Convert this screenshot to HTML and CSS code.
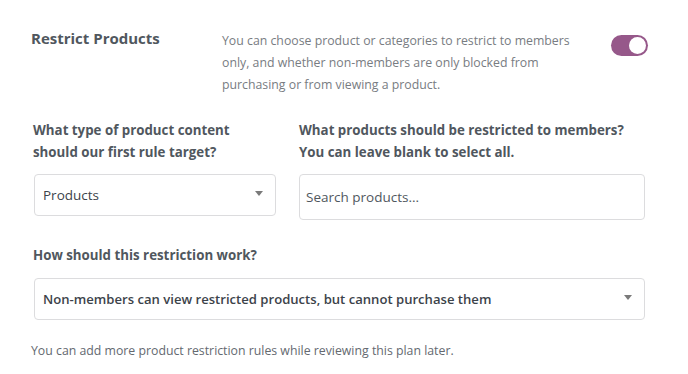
FILE: index.html
```html
<!DOCTYPE html>
<html lang="en">
<head>
    <meta charset="UTF-8">
    <meta name="viewport" content="width=device-width, initial-scale=1.0">
    <title>Restrict Products</title>
    <link rel="stylesheet" href="styles.css">
</head>
<body>
    <div class="panel">
        <div class="head">
            <h2 class="title">Restrict Products</h2>
            <p class="desc">You can choose product or categories to restrict to members only, and whether non-members are only blocked from purchasing or from viewing a product.</p>
            <span class="toggle"><span class="knob"></span></span>
        </div>

        <div class="fields">
            <div class="field">
                <label class="label">What type of product content<br>should our first rule target?</label>
                <div class="select select-small">
                    <span>Products</span>
                    <span class="arrow"></span>
                </div>
            </div>
            <div class="field">
                <label class="label">What products should be restricted to members?<br>You can leave blank to select all.</label>
                <div class="search">Search products...</div>
            </div>
        </div>

        <div class="field field-wide">
            <label class="label">How should this restriction work?</label>
            <div class="select select-strong">
                <span>Non-members can view restricted products, but cannot purchase them</span>
                <span class="arrow"></span>
            </div>
        </div>

        <p class="note">You can add more product restriction rules while reviewing this plan later.</p>
    </div>
</body>
</html>
```

FILE: styles.css
```css
body {
    margin: 0;
    background: #fff;
    font-family: "Open Sans", "Noto Sans", Arial, sans-serif;
    color: #50575e;
}
.panel {
    padding: 27px 43px 0 31px;
}
.head {
    display: flex;
    align-items: flex-start;
}
.title {
    margin: 0;
    width: 191px;
    flex: none;
    font-size: 15px;
    font-weight: 700;
    line-height: 22px;
    color: #50575e;
}
.desc {
    margin: 3px 0 0;
    width: 360px;
    flex: none;
    font-size: 12.3px;
    line-height: 22px;
    color: #787c82;
}
.toggle {
    flex: none;
    margin: 8px -3px 0 auto;
    width: 37px;
    height: 21px;
    border-radius: 11px;
    background: #96588a;
    display: flex;
    align-items: center;
    justify-content: flex-end;
    padding: 0 2px;
    box-sizing: border-box;
}
.knob {
    width: 17px;
    height: 17px;
    border-radius: 50%;
    background: #fff;
}
.fields {
    display: grid;
    grid-template-columns: 243px 346px;
    column-gap: 23px;
    margin-top: 23px;
    padding-left: 2px;
}
.field {
    display: flex;
    flex-direction: column;
}
.field-wide {
    margin-top: 24px;
    padding-left: 2px;
}
.label {
    font-size: 13.3px;
    font-weight: 700;
    line-height: 22px;
    color: #50575e;
    margin-bottom: 11px;
}
.field-wide .label {
    margin-bottom: 12px;
}
.select, .search {
    border: 1px solid #dcdcde;
    border-radius: 4px;
    box-sizing: border-box;
    display: flex;
    align-items: center;
    font-size: 13.5px;
    color: #3c434a;
}
.select {
    height: 42px;
    padding: 0 12px 0 8px;
    justify-content: space-between;
}
.select-small {
    margin-left: 1px;
}
.select-strong {
    margin-left: 1px;
    font-size: 13.1px;
    font-weight: 600;
}
.arrow {
    width: 0;
    height: 0;
    border-left: 4px solid transparent;
    border-right: 4px solid transparent;
    border-top: 5px solid #7a7a7a;
    margin-top: -3px;
}
.search {
    height: 46px;
    padding: 0 6px;
    color: #50575e;
}
.note {
    margin: 20px 0 0;
    font-size: 12.3px;
    line-height: 22px;
    color: #646970;
}
```
